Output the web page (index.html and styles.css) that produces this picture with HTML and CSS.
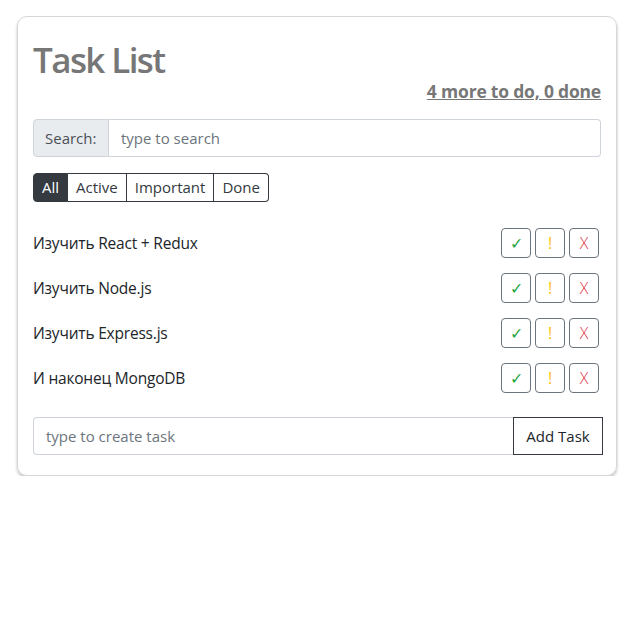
FILE: index.html
```html
<!DOCTYPE html>
<html lang="ru">
<head>
<meta charset="utf-8">
<title>Task List</title>
<link rel="stylesheet" href="styles.css">
</head>
<body>
<div class="card">
  <div class="header">
    <h1 class="title">Task List</h1>
    <div class="counter">4 more to do, 0 done</div>
  </div>
  <div class="search">
    <span class="search-label">Search:</span>
    <input class="search-input" type="text" placeholder="type to search">
  </div>
  <div class="filters">
    <button class="filter active-filter">All</button>
    <button class="filter">Active</button>
    <button class="filter">Important</button>
    <button class="filter">Done</button>
  </div>
  <ul class="tasks">
    <li class="task"><span class="task-name">Изучить React + Redux</span><span class="actions"><button class="act ok">✓</button><button class="act imp">!</button><button class="act del">X</button></span></li>
    <li class="task"><span class="task-name">Изучить Node.js</span><span class="actions"><button class="act ok">✓</button><button class="act imp">!</button><button class="act del">X</button></span></li>
    <li class="task"><span class="task-name">Изучить Express.js</span><span class="actions"><button class="act ok">✓</button><button class="act imp">!</button><button class="act del">X</button></span></li>
    <li class="task"><span class="task-name">И наконец MongoDB</span><span class="actions"><button class="act ok">✓</button><button class="act imp">!</button><button class="act del">X</button></span></li>
  </ul>
  <form class="add-form">
    <input class="add-input" type="text" placeholder="type to create task">
    <button class="add-btn" type="button">Add Task</button>
  </form>
</div>
</body>
</html>
```
FILE: styles.css
```css
* { box-sizing: border-box; }
body {
  margin: 0;
  font-family: "Open Sans", "Noto Sans", sans-serif;
  font-size: 16px;
  color: #212529;
  background: #fff;
}
.card {
  margin: 16px 0 0 17px;
  width: 600px;
  padding: 19px 15px 20px 15px;
  border: 1px solid #d6d6d6;
  border-radius: 10px;
  box-shadow: 0 2px 3px rgba(0,0,0,0.25);
}
.header { display: flex; flex-direction: column; }
.title {
  margin: 0;
  font-size: 35px;
  font-weight: 600;
  line-height: 48px;
  color: #777;
  letter-spacing: -1.6px;
}
.counter {
  align-self: flex-end;
  font-size: 17.5px;
  font-weight: 700;
  color: #777;
  text-decoration: underline;
  line-height: 24px;
  margin-top: -5px;
  letter-spacing: -0.2px;
}
.search {
  display: flex;
  margin-top: 16px;
  height: 38px;
  width: 568px;
}
.search-label {
  display: flex;
  align-items: center;
  padding: 0 11px;
  background: #e9ecef;
  border: 1px solid #ced4da;
  border-radius: 4px 0 0 4px;
  color: #495057;
  font-size: 15px;
  width: 76px;
}
.search-input, .add-input {
  flex: 1;
  border: 1px solid #ced4da;
  border-left: none;
  border-radius: 0 4px 4px 0;
  padding: 0 12px;
  font-family: inherit;
  font-size: 15px;
  color: #495057;
}
.search-input::placeholder, .add-input::placeholder { color: #6c757d; }
.filters {
  display: flex;
  margin-top: 16px;
  width: max-content;
}
.filter {
  font-family: inherit;
  font-size: 15px;
  height: 29px;
  padding: 0 8px;
  background: #fff;
  color: #343a40;
  border: 1px solid #343a40;
  border-left: none;
  line-height: 27px;
}
.filter:first-child { border-left: 1px solid #343a40; border-radius: 4px 0 0 4px; }
.filter:last-child { border-radius: 0 4px 4px 0; }
.active-filter { background: #343a40; color: #fff; }
.tasks {
  list-style: none;
  margin: 18px 0 0 0;
  padding: 0;
}
.task {
  display: flex;
  align-items: center;
  justify-content: space-between;
  height: 45px;
  padding-right: 2px;
}
.task-name { font-size: 15.5px; letter-spacing: -0.2px; }
.actions { display: flex; gap: 4px; }
.act {
  width: 30px;
  height: 30px;
  padding: 0;
  background: #fff;
  border: 1px solid #6c757d;
  border-radius: 4px;
  font-family: inherit;
  font-size: 16px;
  line-height: 28px;
}
.ok { color: #28a745; }
.imp { color: #ffc107; }
.del { color: #dc3545; font-weight: 300; }
.add-form {
  display: flex;
  margin: 17px -2px 0 0;
  height: 38px;
}
.add-input {
  border-left: 1px solid #ced4da;
  border-right: none;
  border-radius: 4px 0 0 4px;
}
.add-btn {
  width: 90px;
  background: #fff;
  border: 1px solid #343a40;
  font-family: inherit;
  font-size: 15px;
  color: #212529;
  padding: 0;
}
```
